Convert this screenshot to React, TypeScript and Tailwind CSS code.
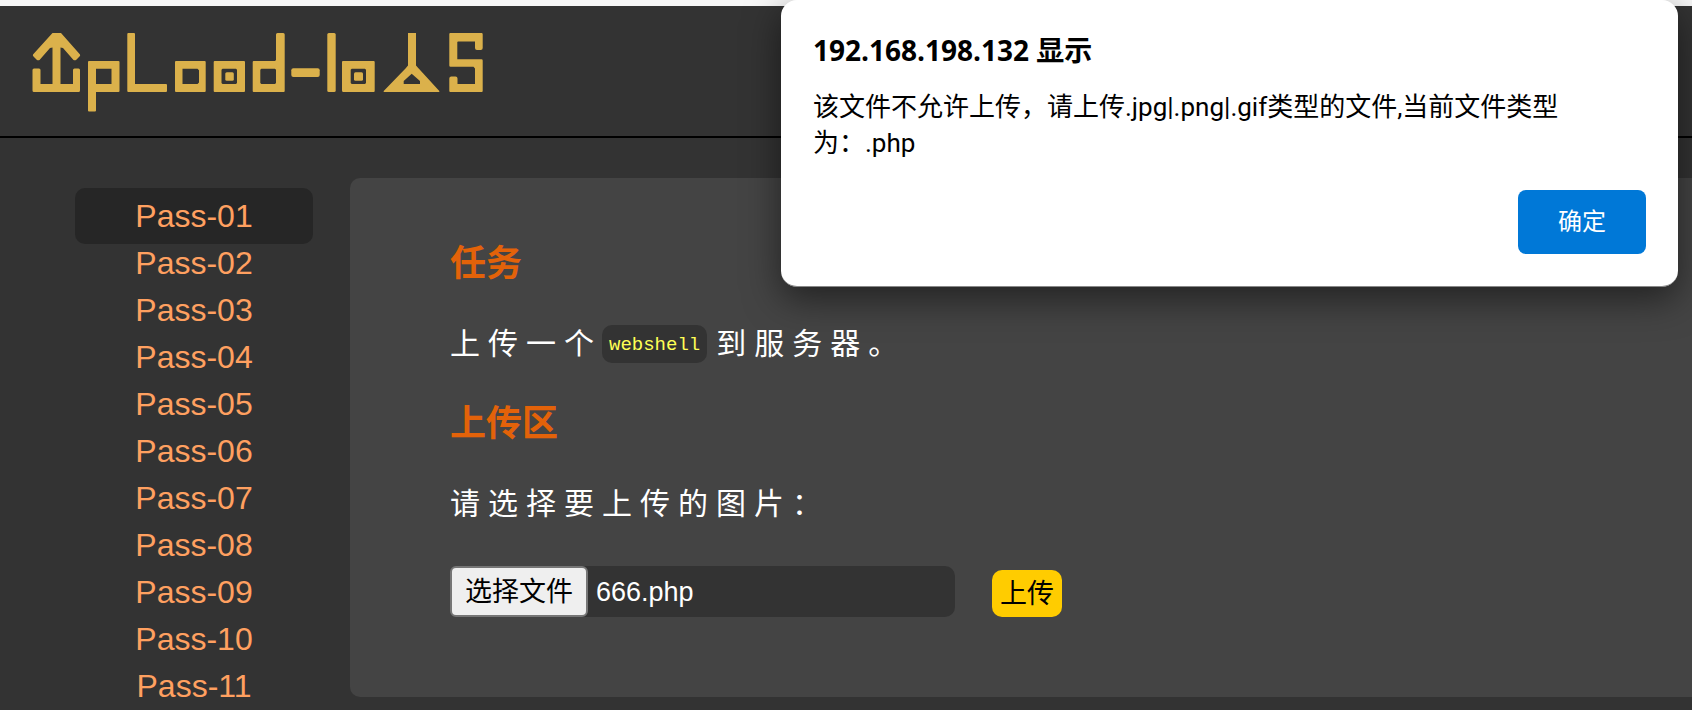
import { useState } from "react";

const passes = ["01", "02", "03", "04", "05", "06", "07", "08", "09", "10", "11"];

function Logo() {
  return (
    <svg
      role="img"
      aria-label="upload-labs"
      viewBox="32 33 452 79"
      className="h-[79px] w-[452px]"
      fill="#dbb14b"
      fillRule="evenodd"
    >
      <path d="M52.5 33h8.5L80 54.5q.5 1-.5 2L76 60q-1 .5-2.500 0L63 48l-2.500-.5V84H73V70q0-1.500 1.500-1.500h4q1.500 0 1.500 1.500v20.500q0 1.500-1.500 1.500H34q-1.500 0-1.500-1.500V70q0-1.500 1.500-1.500h5q1.500 0 1.500 1.500v14h12V47.500L50 48 39.500 60q-1.500.5-2.500 0l-3.500-3.500q-1-1-.5-2z" />
      <path d="M89 61h29.500q1 0 1 1v29q0 1-1 1H96v18.500q0 1-1 1h-6q-1 0-1-1V62q0-1 1-1zm7 7.700V84h15.500V68.700z" />
      <path d="M128.300 33H134q1 0 1 1v50h31q1 0 1 1v6q0 1-1 1h-37.700q-1 0-1-1V34q0-1 1-1z" />
      <path d="M176 61h28.700q1 0 1 1v29q0 1-1 1H176q-1 0-1-1V62q0-1 1-1zm6.500 7.700V84h15l1.500-1.500V70.200l-1.500-1.500z" />
      <path d="M214.700 61H244q1 0 1 1v29q0 1-1 1h-29.300q-1 0-1-1V62q0-1 1-1zm6.800 8.700v13.300l1 1H236l1-1V69.700l-1-1h-13.500z" />
      <rect x="225.300" y="72.300" width="8.500" height="8.500" rx="1.500" />
      <path d="M253.700 61H275l1-1V34.500q0-1.500 1.500-1.500h5.700q1.500 0 1.500 1.500V91q0 1-1 1h-30q-1 0-1-1V62q0-1 1-1zm6.600 8.700v13.300l1 1H275l1-1V69.700l-1-1h-13.700z" />
      <rect x="291.300" y="68.300" width="28.400" height="8.700" rx="2" />
      <rect x="327.300" y="33" width="8.400" height="59" rx="1.500" />
      <path d="M343 61h30.700q1 0 1 1v29q0 1-1 1H343.500q-1.500 0-1.500-1.500V62q0-1 1-1zm8.700 7.700l-1 1v13.300l1 1H365l1-1V69.700l-1-1z" />
      <rect x="354" y="72.300" width="9" height="8.500" rx="1.500" />
      <path d="M408 33h8v32.500l2 2.200L439.300 91v1h-55.600v-1L405.500 68.500l2.500-3zm3.700 40.700L403.700 81v3H420v-3z" />
      <path d="M450.300 33H481.500q1.200 0 1.200 1.200V48q0 2-2 2H477q-2 0-2-2v-6.500h-17L457.300 42v17.300H481.500q1.200 0 1.200 1.200V91q0 1-1 1H450.300q-1 0-1-1V78.500q0-2 2-2h4.200q2 0 2 2V84H475V68.500L473.500 66.700H450.500q-1.200 0-1.200-1.200V34q0-1 1-1z" />
    </svg>
  );
}

function Dialog({ onClose }: { onClose: () => void }) {
  return (
    <div
      role="alertdialog"
      aria-labelledby="dialog-title"
      aria-describedby="dialog-text"
      className="absolute top-0 right-[14px] w-[897px] rounded-2xl border-b border-[#888] bg-white p-8 text-black shadow-[0_12px_36px_rgba(0,0,0,0.5)]"
    >
      <h2
        id="dialog-title"
        className="font-['Open_Sans','Noto_Sans_CJK_SC',sans-serif] text-[28px] leading-9 font-bold"
      >
        192.168.198.132 显示
      </h2>
      <p
        id="dialog-text"
        className="mt-[21px] max-w-[760px] font-['Roboto','Noto_Sans_CJK_SC',sans-serif] text-[26px] leading-9"
      >
        该文件不允许上传，请上传.jpg|.png|.gif类型的文件,当前文件类型为：.php
      </p>
      <div className="mt-[29px] flex justify-end">
        <button
          type="button"
          onClick={onClose}
          className="h-16 w-32 rounded-lg bg-[#0078d7] text-2xl text-white"
        >
          确定
        </button>
      </div>
    </div>
  );
}

export default function App() {
  const [open, setOpen] = useState(true);
  const [fileName, setFileName] = useState("666.php");

  return (
    <div className="relative min-h-screen overflow-hidden bg-[#333] font-['Liberation_Sans','Noto_Sans_CJK_SC',sans-serif]">
      <div className="h-1.5 bg-[#f7f7f7]" />
      <header className="border-b-2 border-black pt-[27px] pb-6 pl-8">
        <Logo />
      </header>

      <div className="flex pl-[75px]">
        <nav className="mr-[37px] w-[238px] shrink-0 pt-[55px]">
          <ul>
            {passes.map((n, i) => (
              <li key={n}>
                <a
                  href={`#pass-${n}`}
                  className={
                    i === 0
                      ? "-mt-[5px] -mb-1 block rounded-[10px] bg-[#262626] pt-[5px] pb-1 text-center text-[32px] leading-[47px] text-[#ffa060]"
                      : "block text-center text-[32px] leading-[47px] text-[#ffa060]"
                  }
                >
                  Pass-{n}
                </a>
              </li>
            ))}
          </ul>
        </nav>

        <main className="mt-10 flex-1 self-start rounded-l-[10px] bg-[#444] pt-[62px] pb-20 pl-[100px] text-white">
          <h3 className="text-4xl leading-[48px] font-bold text-[#e36209]">任务</h3>
          <p className="my-8 flex items-center text-[30px] leading-[48px] tracking-[8px]">
            上传一个
            <code className="mr-[9px] rounded-[10px] bg-[#333] px-[7px] pt-0.5 font-['Liberation_Mono',monospace] text-[19px] leading-9 tracking-normal text-[#ffff55]">
              webshell
            </code>
            到服务器。
          </p>
          <h3 className="text-4xl leading-[48px] font-bold text-[#e36209]">上传区</h3>
          <p className="mt-8 text-[30px] leading-[48px] tracking-[8px]">请选择要上传的图片：</p>

          <form
            className="mt-[38px] flex items-end text-[27px] leading-[45px]"
            onSubmit={(e) => e.preventDefault()}
          >
            <div className="relative w-[505px]">
              <input
                id="upload-file"
                type="file"
                className="peer sr-only"
                onChange={(e) => setFileName(e.target.files?.[0]?.name ?? "")}
              />
              <label
                htmlFor="upload-file"
                className="flex items-center rounded-[10px] bg-[#333] peer-focus-visible:outline-2"
              >
                <span className="rounded-md border-2 border-[#767676] bg-[#efefef] px-[13px] pt-0.5 text-black">
                  选择文件
                </span>
                <span className="ml-2 pt-0.5">{fileName}</span>
              </label>
            </div>
            <button
              type="submit"
              className="ml-[37px] rounded-[10px] bg-[#ffcc00] px-2 pt-0.5 text-black"
            >
              上传
            </button>
          </form>
        </main>
      </div>

      {open && <Dialog onClose={() => setOpen(false)} />}
    </div>
  );
}
